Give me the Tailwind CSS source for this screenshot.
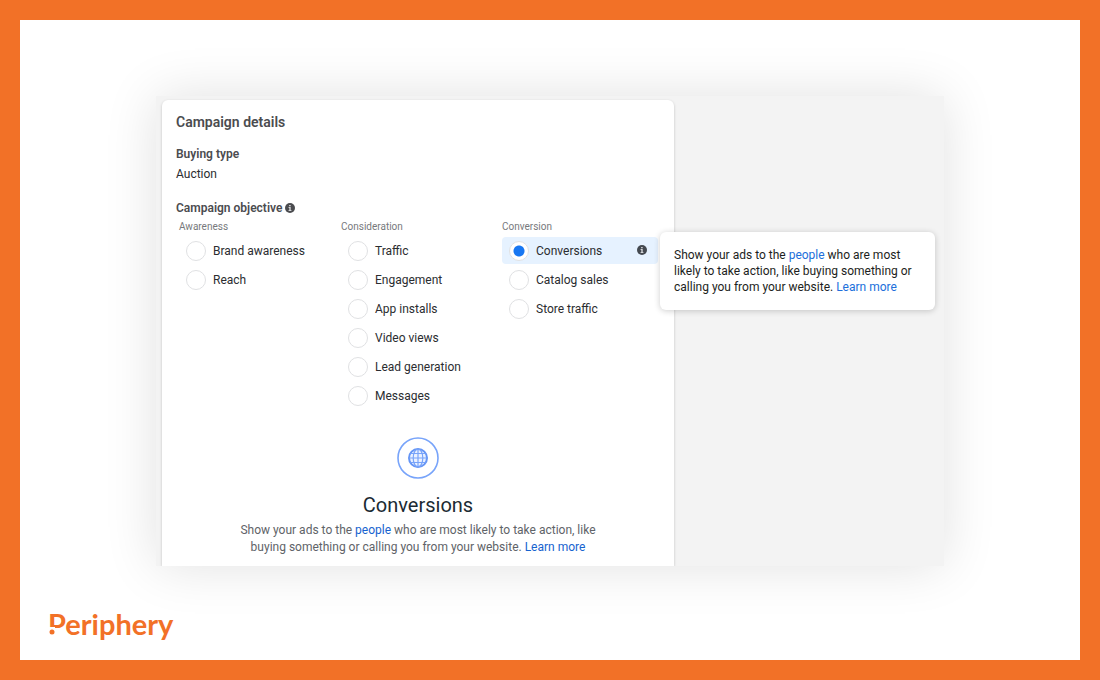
<!DOCTYPE html>
<html lang="en">
<head>
<meta charset="utf-8">
<meta name="viewport" content="width=device-width, initial-scale=1">
<title>Campaign details</title>
<script src="https://cdn.jsdelivr.net/npm/@tailwindcss/browser@4"></script>
</head>
<body class="bg-white font-['Roboto',sans-serif] text-[#2b2d30]">
<svg class="hidden" aria-hidden="true">
  <symbol id="info" viewBox="0 0 10 10">
    <circle cx="5" cy="5" r="5" fill="currentColor"/>
    <path d="M4.1 2h1.6v1.3H4.1zM3.6 4.1h2.1v2.8h.7v1H3.6v-1h.7V5.1h-.7z" fill="#d4d6d9"/>
  </symbol>
</svg>
<div class="flex min-h-screen flex-col border-20 border-[#f27127] px-7 pt-[76px] pb-[18px]">
  <main class="mx-auto w-full max-w-[788px] bg-[#f3f3f3] pl-1.5 shadow-[0_0_50px_rgba(0,0,0,0.12)]">
    <div class="overflow-y-clip pt-1">
    <section class="w-full max-w-[512px] rounded-t-md bg-white px-3.5 pt-3 pb-2.5 shadow-[0_1px_3px_rgba(0,0,0,0.2)]">
      <h1 class="text-sm leading-5 font-semibold text-[#4b4c4f]">Campaign details</h1>
      <h2 class="mt-3 text-xs leading-5 font-semibold text-[#4b4c4f]">Buying type</h2>
      <p class="text-xs leading-5">Auction</p>
      <h2 id="objective" class="mt-3.5 flex items-center gap-[3px] text-xs leading-5 font-semibold text-[#4b4c4f]">Campaign objective
        <svg class="size-2.5" aria-hidden="true"><use href="#info"/></svg>
      </h2>
      <form class="-mr-3.5 ml-[3px] flex gap-[5px]" aria-labelledby="objective">
        <fieldset class="w-[157px]">
          <legend class="text-[10px] leading-[18px] text-[#77797c]">Awareness</legend>
          <div class="mt-px grid gap-0.5">
            <label class="flex h-[27px] items-center gap-[7px] px-[7px] text-xs"><input type="radio" name="o" class="size-5 appearance-none rounded-full border border-[#e0e1e3] bg-white">Brand awareness</label>
            <label class="flex h-[27px] items-center gap-[7px] px-[7px] text-xs"><input type="radio" name="o" class="size-5 appearance-none rounded-full border border-[#e0e1e3] bg-white">Reach</label>
          </div>
        </fieldset>
        <fieldset class="w-[156px]">
          <legend class="text-[10px] leading-[18px] text-[#77797c]">Consideration</legend>
          <div class="mt-px grid gap-0.5">
            <label class="flex h-[27px] items-center gap-[7px] px-[7px] text-xs"><input type="radio" name="o" class="size-5 appearance-none rounded-full border border-[#e0e1e3] bg-white">Traffic</label>
            <label class="flex h-[27px] items-center gap-[7px] px-[7px] text-xs"><input type="radio" name="o" class="size-5 appearance-none rounded-full border border-[#e0e1e3] bg-white">Engagement</label>
            <label class="flex h-[27px] items-center gap-[7px] px-[7px] text-xs"><input type="radio" name="o" class="size-5 appearance-none rounded-full border border-[#e0e1e3] bg-white">App installs</label>
            <label class="flex h-[27px] items-center gap-[7px] px-[7px] text-xs"><input type="radio" name="o" class="size-5 appearance-none rounded-full border border-[#e0e1e3] bg-white">Video views</label>
            <label class="flex h-[27px] items-center gap-[7px] px-[7px] text-xs"><input type="radio" name="o" class="size-5 appearance-none rounded-full border border-[#e0e1e3] bg-white">Lead generation</label>
            <label class="flex h-[27px] items-center gap-[7px] px-[7px] text-xs"><input type="radio" name="o" class="size-5 appearance-none rounded-full border border-[#e0e1e3] bg-white">Messages</label>
          </div>
        </fieldset>
        <fieldset class="w-[156px]">
          <legend class="text-[10px] leading-[18px] text-[#77797c]">Conversion</legend>
          <div class="mt-px grid gap-0.5">
            <div class="relative">
              <label class="flex h-[27px] items-center gap-[7px] rounded-sm bg-[#e6f2ff] px-[7px] text-xs"><input type="radio" name="o" checked class="size-5 appearance-none rounded-full border border-[#e0e1e3] bg-white checked:bg-[radial-gradient(circle,#1877f2_5px,#fff_6px)]">Conversions
                <svg class="mr-1 mb-0.5 ml-auto size-2.5 text-[#444950]" aria-hidden="true"><use href="#info"/></svg></label>
              <div role="tooltip" class="absolute -top-[5px] left-[158px] w-[275px] rounded-md bg-white px-3.5 py-[15px] text-xs leading-4 text-[#1c1e21] shadow-[0_1px_6px_rgba(0,0,0,0.2)]">Show your ads to the <a href="#" class="text-[#216fdb]">people</a> who are most likely to take action, like buying something or calling you from your website. <a href="#" class="text-[#216fdb]">Learn more</a></div>
            </div>
            <label class="flex h-[27px] items-center gap-[7px] px-[7px] text-xs"><input type="radio" name="o" class="size-5 appearance-none rounded-full border border-[#e0e1e3] bg-white">Catalog sales</label>
            <label class="flex h-[27px] items-center gap-[7px] px-[7px] text-xs"><input type="radio" name="o" class="size-5 appearance-none rounded-full border border-[#e0e1e3] bg-white">Store traffic</label>
          </div>
        </fieldset>
      </form>
      <div class="mt-7 flex flex-col items-center text-center">
        <svg class="size-[42px]" viewBox="0 0 42 42" fill="none" stroke="#78a4fa" aria-hidden="true">
          <circle cx="21" cy="21" r="20" stroke-width="1.6"/>
          <circle cx="21" cy="21" r="9" fill="#eaf1ff" stroke="#6595f5" stroke-width="2"/>
          <g stroke-width="1.2"><ellipse cx="21" cy="21" rx="4.8" ry="9"/><path d="M21 12v18M12 21h18M13.5 16.5h15M13.5 25.5h15"/></g>
        </svg>
        <h2 class="mt-3 text-xl leading-7 text-[#1c2b33]">Conversions</h2>
        <p class="mt-[3px] max-w-[370px] text-xs leading-[17px] text-[#606368]">Show your ads to the <a href="#" class="text-[#1763cf]">people</a> who are most likely to take action, like buying something or calling you from your website. <a href="#" class="text-[#1763cf]">Learn more</a></p>
      </div>
    </section>
    </div>
  </main>
  <footer class="mt-auto">
    <div class="relative w-max font-['Lato',sans-serif] text-[29px] leading-9 font-bold text-[#f27127]">Periphery
      <svg class="absolute top-0 left-0 h-9 w-5" viewBox="0 0 20 36" aria-hidden="true">
        <path d="M0 21h7v9H0z" fill="#fff"/>
        <circle cx="4" cy="26" r="2.5" fill="currentColor"/>
      </svg>
    </div>
  </footer>
</div>
</body>
</html>
